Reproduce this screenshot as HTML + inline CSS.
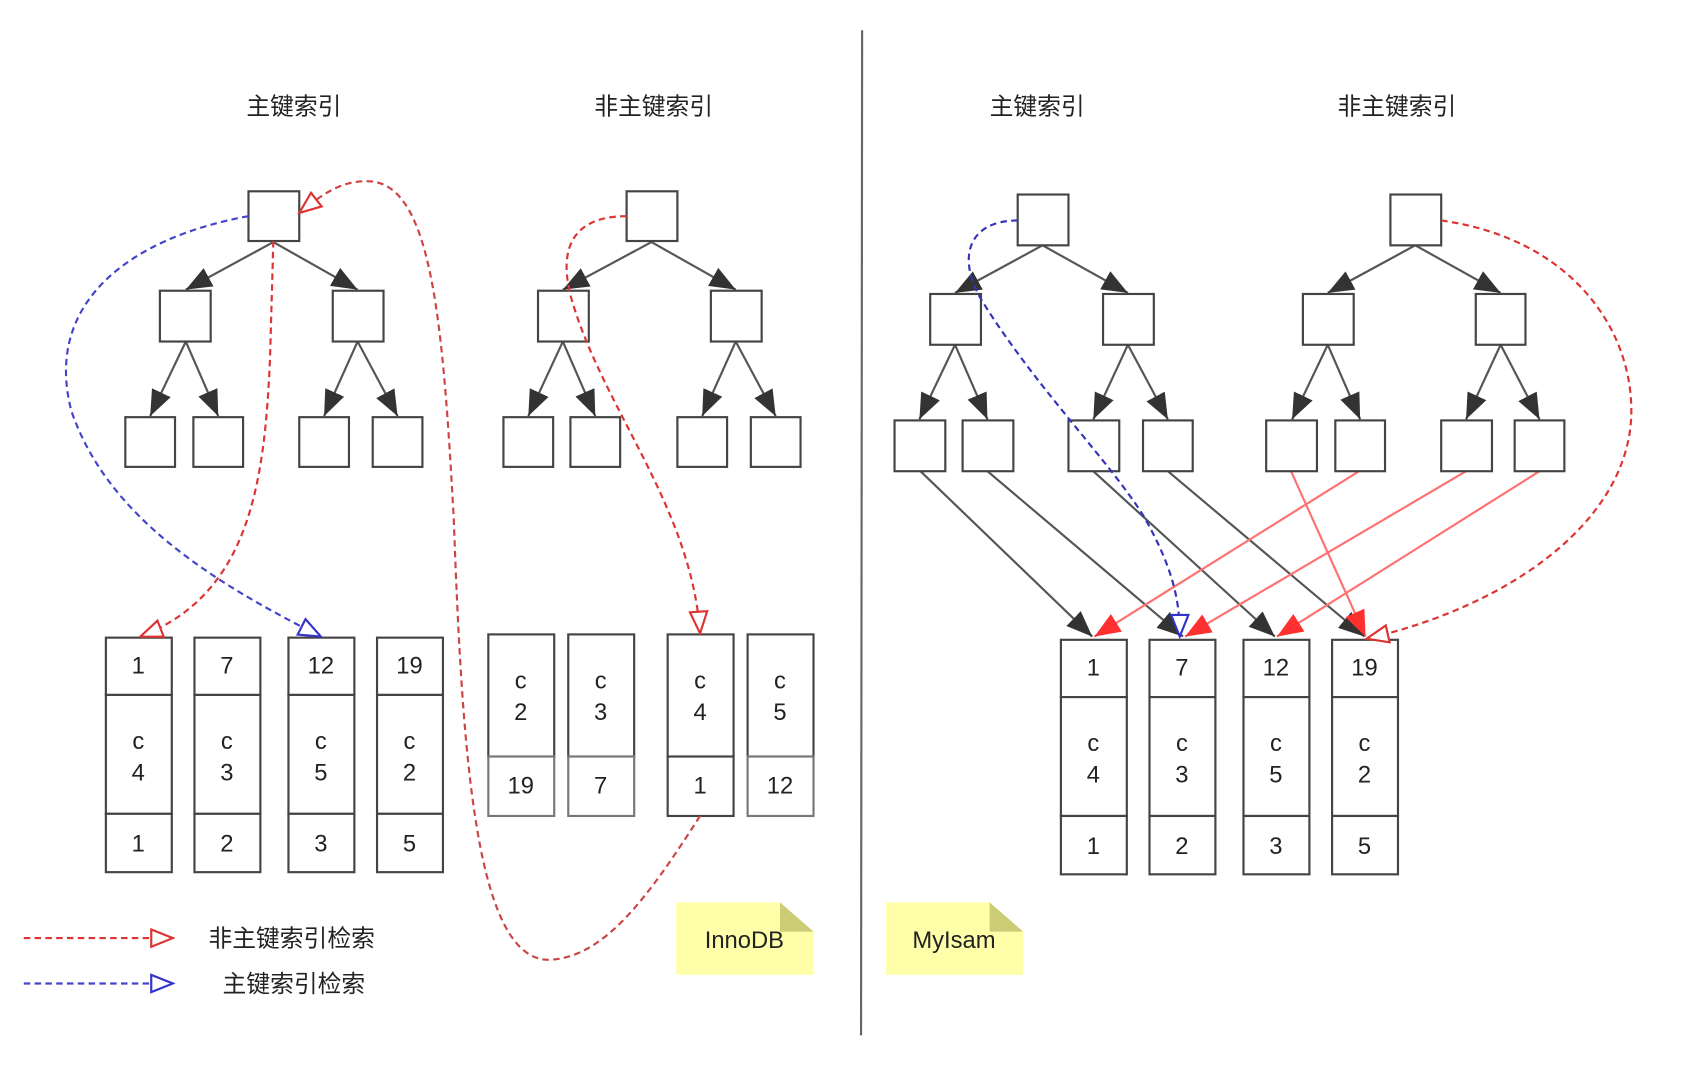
<!DOCTYPE html>
<html><head><meta charset="utf-8"><style>
html,body{margin:0;padding:0;background:#fff;width:1694px;height:1084px;overflow:hidden}
svg{display:block}
text{font-family:"Liberation Sans","Noto Sans CJK SC",sans-serif;fill:#222}
</style></head><body>
<svg width="1694" height="1084" viewBox="0 0 1568 1003" preserveAspectRatio="none" xmlns="http://www.w3.org/2000/svg">
<defs>
<marker id="ahg" viewBox="0 0 10 10" refX="10" refY="5" markerWidth="24" markerHeight="24" markerUnits="userSpaceOnUse" orient="auto"><path d="M0,1 L10,5 L0,9 z" fill="#333"/></marker>
<marker id="ahr" viewBox="0 0 10 10" refX="10" refY="5" markerWidth="24" markerHeight="24" markerUnits="userSpaceOnUse" orient="auto"><path d="M0,1 L10,5 L0,9 z" fill="#ff3030"/></marker>
<marker id="ohr" viewBox="0 0 12 10" refX="11" refY="5" markerWidth="24" markerHeight="20" markerUnits="userSpaceOnUse" orient="auto"><path d="M1,1 L11,5 L1,9 z" fill="#fff" stroke="#d33" stroke-width="1"/></marker>
<marker id="ohb" viewBox="0 0 12 10" refX="11" refY="5" markerWidth="24" markerHeight="20" markerUnits="userSpaceOnUse" orient="auto"><path d="M1,1 L11,5 L1,9 z" fill="#fff" stroke="#33c" stroke-width="1"/></marker>
</defs>

<line x1="798" y1="28" x2="797" y2="958" stroke="#666" stroke-width="2"/>

<g font-size="22" text-anchor="middle">
<text x="272" y="106">主键索引</text>
<text x="605" y="106">非主键索引</text>
<text x="960" y="106">主键索引</text>
<text x="1293" y="106">非主键索引</text>
</g>

<g stroke="#555" stroke-width="2" fill="none" marker-end="url(#ahg)">
<line x1="253" y1="224" x2="172" y2="268"/><line x1="253" y1="224" x2="331" y2="268"/>
<line x1="172" y1="316" x2="139" y2="385"/><line x1="172" y1="316" x2="202" y2="385"/>
<line x1="331" y1="316" x2="300" y2="385"/><line x1="331" y1="316" x2="368" y2="385"/>
<line x1="603" y1="224" x2="521" y2="268"/><line x1="603" y1="224" x2="681" y2="268"/>
<line x1="521" y1="316" x2="489" y2="385"/><line x1="521" y1="316" x2="551" y2="385"/>
<line x1="681" y1="316" x2="650" y2="385"/><line x1="681" y1="316" x2="718" y2="385"/>
<line x1="965" y1="227" x2="884" y2="271"/><line x1="965" y1="227" x2="1044" y2="271"/>
<line x1="884" y1="319" x2="851" y2="388"/><line x1="884" y1="319" x2="914" y2="388"/>
<line x1="1044" y1="319" x2="1012" y2="388"/><line x1="1044" y1="319" x2="1081" y2="388"/>
<line x1="1310" y1="227" x2="1229" y2="271"/><line x1="1310" y1="227" x2="1389" y2="271"/>
<line x1="1229" y1="319" x2="1196" y2="388"/><line x1="1229" y1="319" x2="1259" y2="388"/>
<line x1="1389" y1="319" x2="1357" y2="388"/><line x1="1389" y1="319" x2="1425" y2="388"/>
<line x1="852" y1="436" x2="1011" y2="589"/><line x1="914" y1="436" x2="1095" y2="589"/>
<line x1="1012" y1="436" x2="1180" y2="589"/><line x1="1081" y1="436" x2="1263" y2="589"/>
</g>
<g stroke="#ff7070" stroke-width="2" fill="none" marker-end="url(#ahr)">
<line x1="1258" y1="436" x2="1013" y2="589"/><line x1="1195" y1="436" x2="1264" y2="589"/>
<line x1="1357" y1="436" x2="1097" y2="589"/><line x1="1425" y1="436" x2="1182" y2="589"/>
</g>

<g fill="#fff" stroke="#444" stroke-width="2">
<rect x="230" y="177" width="47" height="46"/>
<rect x="148" y="269" width="47" height="47"/><rect x="308" y="269" width="47" height="47"/>
<rect x="116" y="386" width="46" height="46"/><rect x="179" y="386" width="46" height="46"/><rect x="277" y="386" width="46" height="46"/><rect x="345" y="386" width="46" height="46"/>
<rect x="580" y="177" width="47" height="46"/>
<rect x="498" y="269" width="47" height="47"/><rect x="658" y="269" width="47" height="47"/>
<rect x="466" y="386" width="46" height="46"/><rect x="528" y="386" width="46" height="46"/><rect x="627" y="386" width="46" height="46"/><rect x="695" y="386" width="46" height="46"/>
<rect x="942" y="180" width="47" height="47"/>
<rect x="861" y="272" width="47" height="47"/><rect x="1021" y="272" width="47" height="47"/>
<rect x="828" y="389" width="47" height="47"/><rect x="891" y="389" width="47" height="47"/><rect x="989" y="389" width="47" height="47"/><rect x="1058" y="389" width="46" height="47"/>
<rect x="1287" y="180" width="47" height="47"/>
<rect x="1206" y="272" width="47" height="47"/><rect x="1366" y="272" width="46" height="47"/>
<rect x="1172" y="389" width="47" height="47"/><rect x="1236" y="389" width="46" height="47"/><rect x="1334" y="389" width="47" height="47"/><rect x="1402" y="389" width="46" height="47"/>
</g>

<g fill="#fff" stroke="#444" stroke-width="2">
<rect x="98" y="590" width="61" height="53"/><rect x="98" y="643" width="61" height="110"/><rect x="98" y="753" width="61" height="54"/>
<rect x="180" y="590" width="61" height="53"/><rect x="180" y="643" width="61" height="110"/><rect x="180" y="753" width="61" height="54"/>
<rect x="267" y="590" width="61" height="53"/><rect x="267" y="643" width="61" height="110"/><rect x="267" y="753" width="61" height="54"/>
<rect x="349" y="590" width="61" height="53"/><rect x="349" y="643" width="61" height="110"/><rect x="349" y="753" width="61" height="54"/>
<rect x="452" y="587" width="61" height="113"/><rect x="452" y="700" width="61" height="55" stroke="#777"/>
<rect x="526" y="587" width="61" height="113"/><rect x="526" y="700" width="61" height="55" stroke="#777"/>
<rect x="618" y="587" width="61" height="113"/><rect x="618" y="700" width="61" height="55"/>
<rect x="692" y="587" width="61" height="113"/><rect x="692" y="700" width="61" height="55" stroke="#777"/>
<rect x="982" y="592" width="61" height="53"/><rect x="982" y="645" width="61" height="110"/><rect x="982" y="755" width="61" height="54"/>
<rect x="1064" y="592" width="61" height="53"/><rect x="1064" y="645" width="61" height="110"/><rect x="1064" y="755" width="61" height="54"/>
<rect x="1151" y="592" width="61" height="53"/><rect x="1151" y="645" width="61" height="110"/><rect x="1151" y="755" width="61" height="54"/>
<rect x="1233" y="592" width="61" height="53"/><rect x="1233" y="645" width="61" height="110"/><rect x="1233" y="755" width="61" height="54"/>
</g>
<g font-size="22" text-anchor="middle">
<text x="128" y="623">1</text><text x="128" y="693">c</text><text x="128" y="722">4</text><text x="128" y="788">1</text>
<text x="210" y="623">7</text><text x="210" y="693">c</text><text x="210" y="722">3</text><text x="210" y="788">2</text>
<text x="297" y="623">12</text><text x="297" y="693">c</text><text x="297" y="722">5</text><text x="297" y="788">3</text>
<text x="379" y="623">19</text><text x="379" y="693">c</text><text x="379" y="722">2</text><text x="379" y="788">5</text>
<text x="482" y="637">c</text><text x="482" y="666">2</text><text x="482" y="734">19</text>
<text x="556" y="637">c</text><text x="556" y="666">3</text><text x="556" y="734">7</text>
<text x="648" y="637">c</text><text x="648" y="666">4</text><text x="648" y="734">1</text>
<text x="722" y="637">c</text><text x="722" y="666">5</text><text x="722" y="734">12</text>
<text x="1012" y="625">1</text><text x="1012" y="695">c</text><text x="1012" y="724">4</text><text x="1012" y="790">1</text>
<text x="1094" y="625">7</text><text x="1094" y="695">c</text><text x="1094" y="724">3</text><text x="1094" y="790">2</text>
<text x="1181" y="625">12</text><text x="1181" y="695">c</text><text x="1181" y="724">5</text><text x="1181" y="790">3</text>
<text x="1263" y="625">19</text><text x="1263" y="695">c</text><text x="1263" y="724">2</text><text x="1263" y="790">5</text>
</g>

<g fill="none" stroke-width="2" stroke-dasharray="6,4">
<path d="M230,200 C120,220 40,280 66,380 C100,480 200,540 297,589" stroke="#44c" marker-end="url(#ohb)"/>
<path d="M253,223 L250,330 C245,450 230,550 130,589" stroke="#d33" marker-end="url(#ohr)"/>
<path d="M648,755 C600,830 560,885 510,888 C440,892 428,700 420,480 C410,300 400,175 345,168 C315,165 295,183 277,197" stroke="#c44" marker-end="url(#ohr)"/>
<path d="M580,200 C530,200 515,230 530,280 C560,380 640,470 648,586" stroke="#d33" marker-end="url(#ohr)"/>
<path d="M942,204 C895,204 885,240 910,280 C960,360 1030,430 1060,480 C1088,530 1092,560 1092,589" stroke="#33b" marker-end="url(#ohb)"/>
<path d="M1334,204 C1450,220 1510,300 1510,380 C1510,480 1400,560 1265,591" stroke="#d33" marker-end="url(#ohr)"/>
<line x1="22" y1="868" x2="160" y2="868" stroke="#d33" marker-end="url(#ohr)"/>
<line x1="22" y1="910" x2="160" y2="910" stroke="#44c" marker-end="url(#ohb)"/>
</g>

<g font-size="22">
<text x="193" y="876">非主键索引检索</text>
<text x="206" y="918">主键索引检索</text>
</g>

<polygon points="626,835 722,835 753,862 753,902 626,902" fill="#ffffaa"/>
<polygon points="722,835 753,862 722,862" fill="#cccc77"/>
<text x="689" y="877" font-size="22" text-anchor="middle" fill="#333">InnoDB</text>
<polygon points="820,835 916,835 947,862 947,902 820,902" fill="#ffffaa"/>
<polygon points="916,835 947,862 916,862" fill="#cccc77"/>
<text x="883" y="877" font-size="22" text-anchor="middle" fill="#333">MyIsam</text>
</svg>
</body></html>
